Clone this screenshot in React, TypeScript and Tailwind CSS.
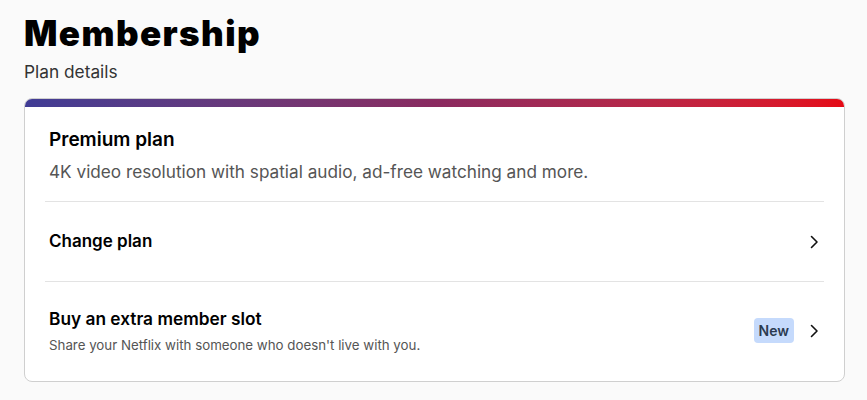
import React from 'react';

const Chevron: React.FC = () => (
  <svg width="10" height="14" viewBox="0 0 10 14" fill="none" className="shrink-0">
    <path d="M2.5 1.5L8 7l-5.5 5.5" stroke="#111" strokeWidth="1.6" strokeLinecap="round" strokeLinejoin="round" />
  </svg>
);

const App: React.FC = () => {
  return (
    <div className="min-h-screen bg-[#fafafa] pl-6 pr-[22px] pt-[10px] font-['Inter',sans-serif] text-black">
      {/* Header */}
      <h1 className="text-[35px] font-black leading-[46px] tracking-[1.4px]">Membership</h1>
      <p className="mt-[4px] text-[17.3px] leading-6 text-[#333]">Plan details</p>

      {/* Card */}
      <div className="mt-[14px] overflow-hidden rounded-lg border border-[#cfcfcf] bg-white">
        <div className="h-2 bg-gradient-to-r from-[#403c95] via-[#8a2a60] to-[#e50914]" />

        <div className="mx-5 border-b border-[#e3e3e3] px-1 pt-[19px] pb-[15px]">
          <div className="text-[19px] font-semibold leading-7">Premium plan</div>
          <div className="mt-[4px] text-[17.2px] leading-7 text-[#555]">
            4K video resolution with spatial audio, ad-free watching and more.
          </div>
        </div>

        <div className="mx-5 flex h-20 items-center justify-between border-b border-[#e3e3e3] pl-1 pr-[5px]">
          <div className="text-[17px] font-semibold">Change plan</div>
          <Chevron />
        </div>

        <div className="mx-5 flex h-[99px] items-center justify-between pl-1 pr-[5px] pb-[2px]">
          <div>
            <div className="text-[17.3px] font-semibold leading-6">Buy an extra member slot</div>
            <div className="mt-[4px] text-[13.3px] leading-5 text-[#555]">
              Share your Netflix with someone who doesn't live with you.
            </div>
          </div>
          <div className="flex items-center gap-[15px]">
            <span className="rounded bg-[#c5dafc] px-[5px] py-[3px] text-[14px] font-semibold leading-[19px] text-[#2b3a50]">
              New
            </span>
            <Chevron />
          </div>
        </div>
      </div>
    </div>
  );
};

export default App;
